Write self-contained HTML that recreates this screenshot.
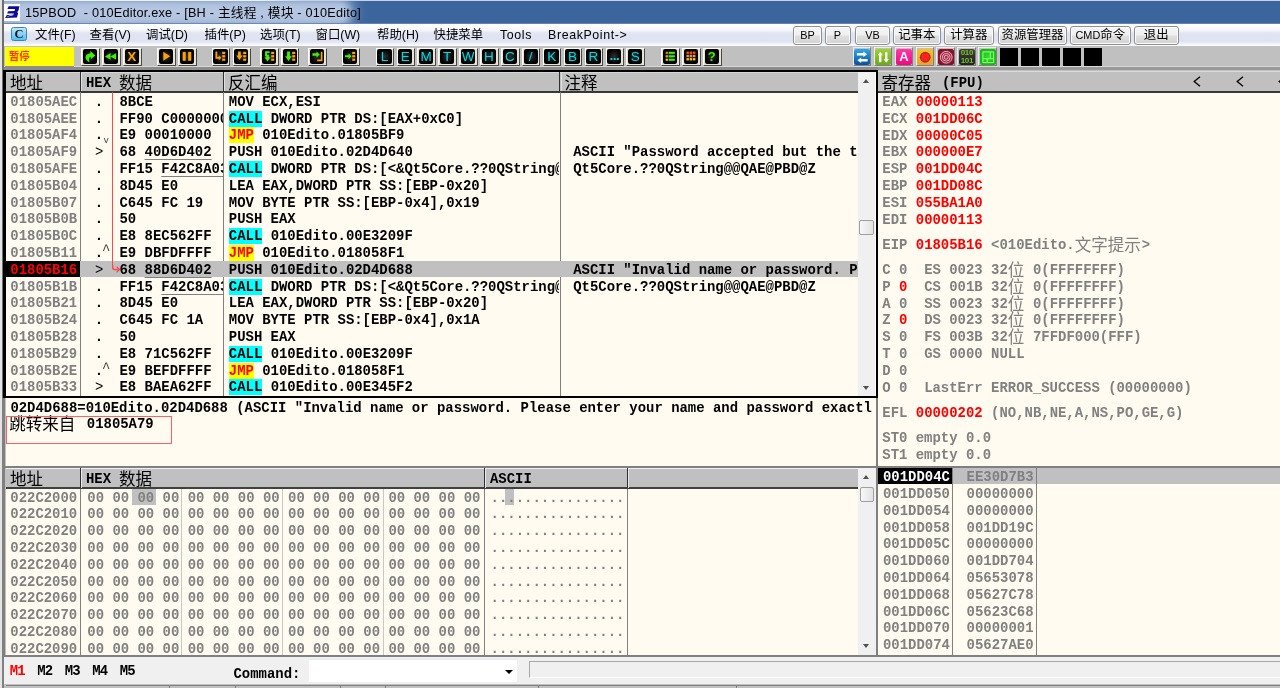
<!DOCTYPE html><html><head><meta charset="utf-8"><title>15PBOD - 010Editor.exe</title><style>
html,body{margin:0;padding:0;}
body{width:1280px;height:688px;overflow:hidden;position:relative;background:#c0c0c0;font-family:"Liberation Sans","Noto Sans CJK SC",sans-serif;}
.a{position:absolute;}
.m{position:absolute;white-space:pre;font-family:"Liberation Mono","DejaVu Sans Mono",monospace;font-weight:bold;font-size:13.95px;line-height:16.8px;height:16.8px;color:#000;}
.g{color:#808080;}
.r{color:#ff0000;}
.w{color:#fff;}
.cj{position:absolute;white-space:pre;font-family:"Liberation Sans","Noto Sans CJK SC",sans-serif;font-weight:400;font-size:16.5px;line-height:16.8px;height:16.8px;color:#000;}
.pane{position:absolute;background:#fffbf0;overflow:hidden;}
.hd{position:absolute;background:#c0c0c0;}
.call{background:#00ffff;padding-top:1.3px;}
.jmp{background:#ffff00;color:#ff0000;padding-top:1.3px;}
.u{text-decoration:underline;text-decoration-color:#808080;text-decoration-thickness:1px;text-underline-offset:3px;}
.sm{font-weight:normal;color:#404040;}
.mi{position:absolute;top:26px;height:18px;line-height:18px;font-size:12.4px;color:#000;white-space:pre;}
.btn{position:absolute;top:26.3px;height:16.4px;border:1px solid #8e8f8f;border-radius:3px;background:linear-gradient(#f6f6f6,#efefef 48%,#dfdfdf 52%,#d4d4d4);font-size:12.4px;line-height:16.4px;text-align:center;color:#000;white-space:pre;box-shadow:inset 0 0 0 1px #fbfbfb;}
.ic{position:absolute;top:47.5px;width:18.6px;height:18px;box-sizing:border-box;background:#e8e4d4;border-right:1.2px solid #484848;border-bottom:1.2px solid #484848;border-top:1px solid #fbfbf8;border-left:1px solid #fbfbf8;}
.ic i{position:absolute;left:0.7px;top:0.5px;width:14.3px;height:14.6px;background:radial-gradient(#303030,#000 65%);border-radius:2.2px;display:block;}
.ic b{position:absolute;left:0.7px;top:0.5px;width:14.3px;height:14.6px;line-height:15.2px;text-align:center;font-family:"Liberation Sans",sans-serif;font-weight:normal;font-size:13.5px;color:#08d8e0;display:block;}
.ic svg{position:absolute;left:0.7px;top:0.5px;width:14.3px;height:14.6px;}
.ci{position:absolute;top:47.3px;width:18.3px;height:18.3px;box-sizing:border-box;border-right:1.2px solid #808080;border-bottom:1.2px solid #808080;border-left:0.8px solid #ececec;border-top:0.8px solid #ececec;}
.ci i{position:absolute;left:0.3px;top:0.3px;width:16.5px;height:16.5px;border-radius:2.5px;display:block;}
.ci svg{position:absolute;left:0.3px;top:0.3px;width:16.5px;height:16.5px;}
</style></head><body><div id="root" style="position:absolute;left:0;top:0;width:1280px;height:688px;will-change:transform">
<div class="a" style="left:0;top:0;width:1280px;height:24.4px;background:#3c659d;overflow:hidden"><div class="a" style="left:-30px;top:9px;width:372px;height:7px;background:#b4c6e1;border-radius:6px;box-shadow:0 0 7px 8px #b4c6e1, 0 0 14px 12px rgba(160,184,218,0.75)"></div><div class="a" style="left:0;top:0;width:300px;height:1.2px;background:linear-gradient(90deg,#eef0f3 0,#eef0f3 260px,#c9d2e0 300px)"></div><div class="a" style="left:300px;top:0;width:980px;height:1.1px;background:#c9d2e0"></div><div class="a" style="left:0;top:22.8px;width:1280px;height:1.6px;background:linear-gradient(rgba(90,120,165,0.9),rgba(120,146,186,0.9))"></div></div>
<div class="a" style="left:3.50px;top:4.00px;width:16.70px;height:17.00px;background:#fff;"></div>
<svg class="a" style="left:3.5px;top:4px" width="17" height="17" viewBox="0 0 17 17"><path d="M4.6 2.2 L15.4 2.2 L14.5 6.6 L13.2 7.9 L14.1 9.2 L13 13.6 L1.2 14 L2.8 11 L9.4 10.8 L9.9 9.4 L3.2 9.4 L4 7.3 L10.5 7.1 L11 5 L3.4 5 Z" fill="#0c0c98"/><path d="M2.6 12.9 C4.6 11 8.6 10.9 10 11.8 C7.6 11.6 5 12.2 2.6 12.9Z" fill="#f4f4ff"/></svg>
<div class="a" style="left:25px;top:3px;height:20px;line-height:20px;font-size:12.7px;letter-spacing:0.21px;color:#000;white-space:pre">15PBOD  - 010Editor.exe - [BH - 主线程 , 模块 - 010Edito]</div>
<div class="a" style="left:0.00px;top:24.40px;width:1280.00px;height:22.00px;background:linear-gradient(#ffffff 0%,#f5f7fb 28%,#e2e6f3 40%,#dde1f1 76%,#eceff7 88%,#fbfbfd 96%);"></div>
<div class="a" style="left:11.2px;top:27px;width:15.6px;height:14.4px;box-sizing:border-box;border:1px solid #3b86ad;border-radius:2.5px;background:linear-gradient(#bfe6fb,#52bff2);font-family:'Liberation Serif',serif;font-weight:bold;font-size:12.5px;line-height:12px;text-align:center;color:#101820">C</div>
<div class="mi" style="left:35px">文件(F)</div>
<div class="mi" style="left:89.5px">查看(V)</div>
<div class="mi" style="left:146px">调试(D)</div>
<div class="mi" style="left:204.5px">插件(P)</div>
<div class="mi" style="left:260px">选项(T)</div>
<div class="mi" style="left:315.5px">窗口(W)</div>
<div class="mi" style="left:377px">帮助(H)</div>
<div class="mi" style="left:433.5px">快捷菜单</div>
<div class="mi" style="left:500px;letter-spacing:0.62px">Tools</div>
<div class="mi" style="left:548px;letter-spacing:0.62px">BreakPoint-&gt;</div>
<div class="btn" style="left:793px;width:27px"><span style="font-size:10.9px">BP</span></div>
<div class="btn" style="left:824.5px;width:24.0px"><span style="font-size:10.9px">P</span></div>
<div class="btn" style="left:855px;width:33px"><span style="font-size:10.9px">VB</span></div>
<div class="btn" style="left:893px;width:45.5px">记事本</div>
<div class="btn" style="left:943.5px;width:48.5px">计算器</div>
<div class="btn" style="left:998px;width:67px">资源管理器</div>
<div class="btn" style="left:1070px;width:58.5px"><span style="font-size:10.9px">CMD</span>命令</div>
<div class="btn" style="left:1133.5px;width:43.5px">退出</div>
<div class="a" style="left:0.00px;top:46.40px;width:1280.00px;height:24.00px;background:#c0c0c0;"></div>
<div class="a" style="left:0.00px;top:65.80px;width:1280.00px;height:1.30px;background:#d8d8d8;"></div>
<div class="a" style="left:0.00px;top:67.10px;width:1280.00px;height:2.60px;background:#8c8c8c;"></div>
<div class="a" style="left:2.80px;top:69.60px;width:875.00px;height:1.90px;background:#000;"></div>
<div class="a" style="left:877.80px;top:67.10px;width:403.00px;height:3.40px;background:#9a9a9a;"></div>
<div class="a" style="left:877.80px;top:70.50px;width:403.00px;height:1.20px;background:#dadada;"></div>
<div class="a" style="left:4.60px;top:46.60px;width:69.40px;height:20.00px;background:#909090;"></div>
<div class="a" style="left:5.20px;top:47.20px;width:68.60px;height:19.20px;background:#ffff00;"></div>
<div class="a" style="left:9px;top:48.3px;height:18px;line-height:18px;font-size:10.3px;font-weight:bold;color:#ff3000">暂停</div>
<div class="ic" style="left:81.20px"><i></i><svg viewBox="0 0 14 14"><path d="M7.2 1.8 L12.1 6.2 L7.6 9.8 L7.6 7.8 C6 7.8 5.2 9.6 6.6 13 C3.2 11.4 1.6 8.4 3 6.2 C4 4.6 5.6 4.2 7.2 4.2 Z" fill="#40f000"/></svg></div>
<div class="ic" style="left:102.10px"><i></i><svg viewBox="0 0 14 14"><path d="M6.4 3.8 L6.4 10.5 L0.9 7.15 Z M11.9 3.8 L11.9 10.5 L6.4 7.15 Z" fill="#40f000"/></svg></div>
<div class="ic" style="left:123.00px"><i></i><b style="color:#ffa000;font-weight:bold;font-size:13.5px">X</b></div>
<div class="ic" style="left:157.10px"><i></i><svg viewBox="0 0 14 14"><path d="M4.2 2.6 L11 7 L4.2 11.4 Z" fill="#ffa000"/></svg></div>
<div class="ic" style="left:178.00px"><i></i><svg viewBox="0 0 14 14"><rect x="2.6" y="2.7" width="3" height="8.7" fill="#ffa000"/><rect x="8" y="2.7" width="3" height="8.7" fill="#ffa000"/></svg></div>
<div class="ic" style="left:211.60px"><i></i><svg viewBox="0 0 14 14"><path d="M2.4 2.2 L4.2 2.2 L4.2 7.6 L5.6 7.6 L5.6 6 L8.2 8.5 L5.6 11 L5.6 9.4 L2.4 9.4 Z" fill="#ffa000"/><rect x="9" y="2.6" width="3" height="2.2" fill="#ffa000"/><rect x="9" y="5.9" width="3" height="2.2" fill="#ffa000"/><rect x="9" y="9.2" width="3" height="2.2" fill="#ffa000"/></svg></div>
<div class="ic" style="left:232.50px"><i></i><svg viewBox="0 0 14 14"><path d="M4 2.4 L6.6 2.4 L6.6 6.2 L8.4 6.2 L5.3 10.6 L2.2 6.2 L4 6.2 Z" fill="#ffa000"/><rect x="9" y="2.6" width="3" height="2.2" fill="#ffa000"/><rect x="9" y="5.9" width="3" height="2.2" fill="#ffa000"/><rect x="9" y="9.2" width="3" height="2.2" fill="#ffa000"/></svg></div>
<div class="ic" style="left:260.00px"><i></i><svg viewBox="0 0 14 14"><path d="M7.4 2 L7.4 3.8 L5 3.8 L5 5.6 L6.8 5.6 L6.8 8 L8.4 8 L5.4 12 L2.4 8 L4 8 L4 7 L3 7 L3 2 Z" fill="#40f000"/><rect x="9" y="2.6" width="3" height="2.2" fill="#ffa000"/><rect x="9" y="5.9" width="3" height="2.2" fill="#ffa000"/><rect x="9" y="9.2" width="3" height="2.2" fill="#ffa000"/></svg></div>
<div class="ic" style="left:280.90px"><i></i><svg viewBox="0 0 14 14"><path d="M4 2.2 L6.8 2.2 L6.8 7 L8.6 7 L5.4 11.6 L2.2 7 L4 7 Z" fill="#40f000"/><rect x="9" y="2.6" width="3" height="2.2" fill="#ffa000"/><rect x="9" y="5.9" width="3" height="2.2" fill="#ffa000"/><rect x="9" y="9.2" width="3" height="2.2" fill="#ffa000"/></svg></div>
<div class="ic" style="left:308.20px"><i></i><svg viewBox="0 0 14 14"><path d="M2.4 4 L6.4 4 L6.4 2.2 L9.6 5.2 L6.4 8.2 L6.4 6.4 L2.4 6.4 Z" fill="#40f000"/><path d="M10.6 2.6 L12.2 2.6 L12.2 11.8 L7 11.8 L7 10.2 L10.6 10.2 Z" fill="#ffa000"/></svg></div>
<div class="ic" style="left:341.50px"><i></i><svg viewBox="0 0 14 14"><path d="M2 6 L5.4 6 L5.4 4.2 L8.4 7 L5.4 9.8 L5.4 8 L2 8 Z" fill="#40f000"/><rect x="9" y="2.6" width="3" height="2.2" fill="#ffa000"/><rect x="9" y="5.9" width="3" height="2.2" fill="#ffa000"/><rect x="9" y="9.2" width="3" height="2.2" fill="#ffa000"/></svg></div>
<div class="ic" style="left:375.60px"><i></i><b>L</b></div>
<div class="ic" style="left:396.50px"><i></i><b>E</b></div>
<div class="ic" style="left:417.40px"><i></i><b>M</b></div>
<div class="ic" style="left:438.30px"><i></i><b>T</b></div>
<div class="ic" style="left:459.20px"><i></i><b>W</b></div>
<div class="ic" style="left:480.10px"><i></i><b>H</b></div>
<div class="ic" style="left:501.00px"><i></i><b>C</b></div>
<div class="ic" style="left:521.90px"><i></i><b>/</b></div>
<div class="ic" style="left:542.80px"><i></i><b>K</b></div>
<div class="ic" style="left:563.70px"><i></i><b>B</b></div>
<div class="ic" style="left:584.60px"><i></i><b>R</b></div>
<div class="ic" style="left:605.50px"><i></i><b style="font-weight:bold;line-height:13px;letter-spacing:-0.5px">...</b></div>
<div class="ic" style="left:626.40px"><i></i><b>S</b></div>
<div class="ic" style="left:661.20px"><i></i><svg viewBox="0 0 14 14"><rect x="2.6" y="2.6" width="2.2" height="2" fill="#ff8000"/><rect x="5.6" y="2.6" width="6" height="2" fill="#40f000"/><rect x="2.6" y="6.0" width="2.2" height="2" fill="#ffb000"/><rect x="5.6" y="6.0" width="6" height="2" fill="#40f000"/><rect x="2.6" y="9.4" width="2.2" height="2" fill="#ffd000"/><rect x="5.6" y="9.4" width="6" height="2" fill="#40f000"/></svg></div>
<div class="ic" style="left:682.10px"><i></i><svg viewBox="0 0 14 14"><rect x="2.4" y="2.4" width="2.4" height="2.2" fill="#ff5020"/><rect x="5.6" y="2.4" width="2.4" height="2.2" fill="#ff5020"/><rect x="8.8" y="2.4" width="2.4" height="2.2" fill="#ff5020"/><rect x="2.4" y="5.6" width="2.4" height="2.2" fill="#ff9020"/><rect x="5.6" y="5.6" width="2.4" height="2.2" fill="#ff9020"/><rect x="8.8" y="5.6" width="2.4" height="2.2" fill="#ff9020"/><rect x="2.4" y="8.8" width="2.4" height="2.2" fill="#ffc020"/><rect x="5.6" y="8.8" width="2.4" height="2.2" fill="#ffc020"/><rect x="8.8" y="8.8" width="2.4" height="2.2" fill="#ffc020"/></svg></div>
<div class="ic" style="left:703.00px"><i></i><b style="color:#40f000;font-weight:bold;font-size:13px">?</b></div>
<div class="ci" style="left:852.60px"><i style="background:linear-gradient(#2aa8f0,#0a4f9c)"></i><svg viewBox="0 0 17 17"><path d="M3 4.2 L9.6 4.2 L9.6 2.6 L13.6 5.4 L9.6 8.2 L9.6 6.6 L3 6.6 Z M14 10.4 L7.4 10.4 L7.4 8.8 L3.4 11.6 L7.4 14.4 L7.4 12.8 L14 12.8 Z" fill="#fff"/></svg></div>
<div class="ci" style="left:873.60px"><i style="background:linear-gradient(#9bd430,#6aa818)"></i><svg viewBox="0 0 17 17"><path d="M5.4 2.8 L8 6.4 L6.6 6.4 L6.6 13.6 L4.2 13.6 L4.2 6.4 L2.8 6.4 Z M11.6 14.2 L9 10.6 L10.4 10.6 L10.4 3.4 L12.8 3.4 L12.8 10.6 L14.2 10.6 Z" fill="#fff"/></svg></div>
<div class="ci" style="left:894.50px"><i style="background:linear-gradient(#ff38a8,#f0087c)"></i><b style="position:absolute;left:0;top:0;width:17px;height:17px;line-height:17.5px;text-align:center;font-size:13px;font-weight:bold;color:#fff;display:block">A</b></div>
<div class="ci" style="left:915.50px"><i style="background:linear-gradient(#f8c020,#f0a030)"></i><svg viewBox="0 0 17 17"><circle cx="8.5" cy="8.5" r="5.6" fill="#a83018"/><circle cx="8.5" cy="8.5" r="4.2" fill="#ff2020"/></svg></div>
<div class="ci" style="left:936.40px"><i style="background:radial-gradient(#b02848,#780820)"></i><svg viewBox="0 0 17 17"><circle cx="8.5" cy="8.5" r="6" fill="none" stroke="#f0d0d8" stroke-width="0.9"/><circle cx="8.5" cy="8.5" r="4" fill="none" stroke="#f0d0d8" stroke-width="0.9"/><circle cx="8.5" cy="8.5" r="2" fill="none" stroke="#f0d0d8" stroke-width="0.9"/></svg></div>
<div class="ci" style="left:957.40px"><i style="background:linear-gradient(#404040,#202020)"></i><b style="position:absolute;left:0;top:0.5px;width:17px;line-height:8px;text-align:center;font-size:8px;font-weight:bold;color:#78c020;display:block;letter-spacing:-0.3px">010<br>101</b></div>
<div class="ci" style="left:978.30px"><i style="background:radial-gradient(#30e030,#10a810)"></i><svg viewBox="0 0 17 17"><rect x="3" y="3" width="11" height="11" fill="none" stroke="#90ff70" stroke-width="1.1"/><path d="M3 10 L14 10 M10.6 3 L10.6 10 M7.4 10 L7.4 14" stroke="#90ff70" stroke-width="1.1" fill="none"/></svg></div>
<div class="a" style="left:1000.30px;top:47.60px;width:18.00px;height:18.60px;background:#000;"></div>
<div class="a" style="left:1021.30px;top:47.60px;width:18.00px;height:18.60px;background:#000;"></div>
<div class="a" style="left:1042.30px;top:47.60px;width:18.00px;height:18.60px;background:#000;"></div>
<div class="a" style="left:1063.30px;top:47.60px;width:18.00px;height:18.60px;background:#000;"></div>
<div class="a" style="left:1084.30px;top:47.60px;width:18.00px;height:18.60px;background:#000;"></div>
<div class="a" style="left:0.00px;top:0.00px;width:2.00px;height:688.00px;background:#e4e4e4;"></div>
<div class="a" style="left:2.00px;top:0.00px;width:1.50px;height:688.00px;background:#6e6e6e;"></div>
<div class="a" style="left:2.80px;top:70.00px;width:875.00px;height:328.30px;background:#000;"></div>
<div class="pane" style="left:5.5px;top:71.5px;width:870.1px;height:324.7px">
<div class="a" style="left:0.00px;top:0.00px;width:852.50px;height:19.60px;background:#c0c0c0;"></div>
<div class="a" style="left:0.00px;top:19.50px;width:852.50px;height:1.60px;background:#383838;"></div>
<div class="a" style="left:0.00px;top:0.00px;width:852.50px;height:1.00px;background:#d6d6d6;"></div>
<div class="a" style="left:74.50px;top:0.00px;width:1.20px;height:20.00px;background:#303030;"></div>
<div class="a" style="left:75.70px;top:1.00px;width:1.00px;height:18.50px;background:#e0e0e0;"></div>
<div class="a" style="left:74.80px;top:20.90px;width:1.00px;height:304.00px;background:#808080;"></div>
<div class="a" style="left:217.50px;top:0.00px;width:1.20px;height:20.00px;background:#303030;"></div>
<div class="a" style="left:218.70px;top:1.00px;width:1.00px;height:18.50px;background:#e0e0e0;"></div>
<div class="a" style="left:217.80px;top:20.90px;width:1.00px;height:304.00px;background:#808080;"></div>
<div class="a" style="left:553.80px;top:0.00px;width:1.20px;height:20.00px;background:#303030;"></div>
<div class="a" style="left:555.00px;top:1.00px;width:1.00px;height:18.50px;background:#e0e0e0;"></div>
<div class="a" style="left:554.10px;top:20.90px;width:1.00px;height:304.00px;background:#808080;"></div>
<div class="cj" style="left:4.50px;top:3.50px;">地址</div>
<div class="m " style="left:80.50px;top:3.50px;">HEX</div>
<div class="cj" style="left:113.50px;top:3.50px;">数据</div>
<div class="cj" style="left:222.50px;top:3.50px;">反汇编</div>
<div class="cj" style="left:559.00px;top:3.50px;">注释</div>
<div class="a" style="left:0.00px;top:189.50px;width:852.50px;height:16.00px;background:#c0c0c0;"></div>
<div class="a" style="left:0.00px;top:189.50px;width:74.50px;height:16.00px;background:#000;"></div>
<div class="m g" style="left:4.80px;top:22.50px;">01805AEC</div>
<div class="m " style="left:81.00px;top:22.50px;"> . </div>
<div class="a" style="left:114.00px;top:22.50px;width:103.50px;height:16.80px;overflow:hidden"><div class="m" style="left:0;top:0">8BCE</div></div>
<div class="a" style="left:223.30px;top:22.50px;width:330.50px;height:16.80px;overflow:hidden"><div class="m" style="left:0;top:0">MOV ECX,ESI</div></div>
<div class="m g" style="left:4.80px;top:39.50px;">01805AEE</div>
<div class="m " style="left:81.00px;top:39.50px;"> . </div>
<div class="a" style="left:114.00px;top:39.50px;width:103.50px;height:16.80px;overflow:hidden"><div class="m" style="left:0;top:0">FF90 C0000000</div></div>
<div class="a" style="left:223.30px;top:39.50px;width:330.50px;height:16.80px;overflow:hidden"><div class="m" style="left:0;top:0"><span class="call">CALL</span> DWORD PTR DS:[EAX+0xC0]</div></div>
<div class="m g" style="left:4.80px;top:55.50px;">01805AF4</div>
<div class="m " style="left:81.00px;top:55.50px;"> .<span class="sm" style="font-size:9px;position:relative;top:3.8px;left:0.2px">v</span></div>
<div class="a" style="left:114.00px;top:55.50px;width:103.50px;height:16.80px;overflow:hidden"><div class="m" style="left:0;top:0">E9 00010000</div></div>
<div class="a" style="left:223.30px;top:55.50px;width:330.50px;height:16.80px;overflow:hidden"><div class="m" style="left:0;top:0"><span class="jmp">JMP</span> 010Edito.01805BF9</div></div>
<div class="m g" style="left:4.80px;top:72.50px;">01805AF9</div>
<div class="m " style="left:81.00px;top:72.50px;"> <span style="font-weight:normal">&gt;</span> </div>
<div class="a" style="left:114.00px;top:72.50px;width:103.50px;height:16.80px;overflow:hidden"><div class="m" style="left:0;top:0">68 <span class="u">40D6D402</span></div></div>
<div class="a" style="left:223.30px;top:72.50px;width:330.50px;height:16.80px;overflow:hidden"><div class="m" style="left:0;top:0">PUSH 010Edito.02D4D640</div></div>
<div class="a" style="left:567.70px;top:72.50px;width:284.60px;height:16.80px;overflow:hidden"><div class="m" style="left:0;top:0">ASCII "Password accepted but the t</div></div>
<div class="m g" style="left:4.80px;top:89.50px;">01805AFE</div>
<div class="m " style="left:81.00px;top:89.50px;"> . </div>
<div class="a" style="left:114.00px;top:89.50px;width:103.50px;height:16.80px;overflow:hidden"><div class="m" style="left:0;top:0">FF15 <span class="u">F42C8A03</span></div></div>
<div class="a" style="left:223.30px;top:89.50px;width:330.50px;height:16.80px;overflow:hidden"><div class="m" style="left:0;top:0"><span class="call">CALL</span> DWORD PTR DS:[&lt;&amp;Qt5Core.??0QString@</div></div>
<div class="a" style="left:567.70px;top:89.50px;width:284.60px;height:16.80px;overflow:hidden"><div class="m" style="left:0;top:0">Qt5Core.??0QString@@QAE@PBD@Z</div></div>
<div class="m g" style="left:4.80px;top:106.50px;">01805B04</div>
<div class="m " style="left:81.00px;top:106.50px;"> . </div>
<div class="a" style="left:114.00px;top:106.50px;width:103.50px;height:16.80px;overflow:hidden"><div class="m" style="left:0;top:0">8D45 E0</div></div>
<div class="a" style="left:223.30px;top:106.50px;width:330.50px;height:16.80px;overflow:hidden"><div class="m" style="left:0;top:0">LEA EAX,DWORD PTR SS:[EBP-0x20]</div></div>
<div class="m g" style="left:4.80px;top:123.50px;">01805B07</div>
<div class="m " style="left:81.00px;top:123.50px;"> . </div>
<div class="a" style="left:114.00px;top:123.50px;width:103.50px;height:16.80px;overflow:hidden"><div class="m" style="left:0;top:0">C645 FC 19</div></div>
<div class="a" style="left:223.30px;top:123.50px;width:330.50px;height:16.80px;overflow:hidden"><div class="m" style="left:0;top:0">MOV BYTE PTR SS:[EBP-0x4],0x19</div></div>
<div class="m g" style="left:4.80px;top:139.50px;">01805B0B</div>
<div class="m " style="left:81.00px;top:139.50px;"> . </div>
<div class="a" style="left:114.00px;top:139.50px;width:103.50px;height:16.80px;overflow:hidden"><div class="m" style="left:0;top:0">50</div></div>
<div class="a" style="left:223.30px;top:139.50px;width:330.50px;height:16.80px;overflow:hidden"><div class="m" style="left:0;top:0">PUSH EAX</div></div>
<div class="m g" style="left:4.80px;top:156.50px;">01805B0C</div>
<div class="m " style="left:81.00px;top:156.50px;"> . </div>
<div class="a" style="left:114.00px;top:156.50px;width:103.50px;height:16.80px;overflow:hidden"><div class="m" style="left:0;top:0">E8 8EC562FF</div></div>
<div class="a" style="left:223.30px;top:156.50px;width:330.50px;height:16.80px;overflow:hidden"><div class="m" style="left:0;top:0"><span class="call">CALL</span> 010Edito.00E3209F</div></div>
<div class="m g" style="left:4.80px;top:173.50px;">01805B11</div>
<div class="m " style="left:81.00px;top:173.50px;"> .<span class="sm" style="position:relative;top:-2.6px;left:-1.2px">^</span></div>
<div class="a" style="left:114.00px;top:173.50px;width:103.50px;height:16.80px;overflow:hidden"><div class="m" style="left:0;top:0">E9 DBFDFFFF</div></div>
<div class="a" style="left:223.30px;top:173.50px;width:330.50px;height:16.80px;overflow:hidden"><div class="m" style="left:0;top:0"><span class="jmp">JMP</span> 010Edito.018058F1</div></div>
<div class="m r" style="left:4.80px;top:190.50px;">01805B16</div>
<div class="m " style="left:81.00px;top:190.50px;"> <span style="font-weight:normal">&gt;</span> </div>
<div class="a" style="left:114.00px;top:190.50px;width:103.50px;height:16.80px;overflow:hidden"><div class="m" style="left:0;top:0">68 <span class="u">88D6D402</span></div></div>
<div class="a" style="left:223.30px;top:190.50px;width:330.50px;height:16.80px;overflow:hidden"><div class="m" style="left:0;top:0">PUSH 010Edito.02D4D688</div></div>
<div class="a" style="left:567.70px;top:190.50px;width:284.60px;height:16.80px;overflow:hidden"><div class="m" style="left:0;top:0">ASCII "Invalid name or password. P</div></div>
<div class="m g" style="left:4.80px;top:207.50px;">01805B1B</div>
<div class="m " style="left:81.00px;top:207.50px;"> . </div>
<div class="a" style="left:114.00px;top:207.50px;width:103.50px;height:16.80px;overflow:hidden"><div class="m" style="left:0;top:0">FF15 <span class="u">F42C8A03</span></div></div>
<div class="a" style="left:223.30px;top:207.50px;width:330.50px;height:16.80px;overflow:hidden"><div class="m" style="left:0;top:0"><span class="call">CALL</span> DWORD PTR DS:[&lt;&amp;Qt5Core.??0QString@</div></div>
<div class="a" style="left:567.70px;top:207.50px;width:284.60px;height:16.80px;overflow:hidden"><div class="m" style="left:0;top:0">Qt5Core.??0QString@@QAE@PBD@Z</div></div>
<div class="m g" style="left:4.80px;top:223.50px;">01805B21</div>
<div class="m " style="left:81.00px;top:223.50px;"> . </div>
<div class="a" style="left:114.00px;top:223.50px;width:103.50px;height:16.80px;overflow:hidden"><div class="m" style="left:0;top:0">8D45 E0</div></div>
<div class="a" style="left:223.30px;top:223.50px;width:330.50px;height:16.80px;overflow:hidden"><div class="m" style="left:0;top:0">LEA EAX,DWORD PTR SS:[EBP-0x20]</div></div>
<div class="m g" style="left:4.80px;top:240.50px;">01805B24</div>
<div class="m " style="left:81.00px;top:240.50px;"> . </div>
<div class="a" style="left:114.00px;top:240.50px;width:103.50px;height:16.80px;overflow:hidden"><div class="m" style="left:0;top:0">C645 FC 1A</div></div>
<div class="a" style="left:223.30px;top:240.50px;width:330.50px;height:16.80px;overflow:hidden"><div class="m" style="left:0;top:0">MOV BYTE PTR SS:[EBP-0x4],0x1A</div></div>
<div class="m g" style="left:4.80px;top:257.50px;">01805B28</div>
<div class="m " style="left:81.00px;top:257.50px;"> . </div>
<div class="a" style="left:114.00px;top:257.50px;width:103.50px;height:16.80px;overflow:hidden"><div class="m" style="left:0;top:0">50</div></div>
<div class="a" style="left:223.30px;top:257.50px;width:330.50px;height:16.80px;overflow:hidden"><div class="m" style="left:0;top:0">PUSH EAX</div></div>
<div class="m g" style="left:4.80px;top:274.50px;">01805B29</div>
<div class="m " style="left:81.00px;top:274.50px;"> . </div>
<div class="a" style="left:114.00px;top:274.50px;width:103.50px;height:16.80px;overflow:hidden"><div class="m" style="left:0;top:0">E8 71C562FF</div></div>
<div class="a" style="left:223.30px;top:274.50px;width:330.50px;height:16.80px;overflow:hidden"><div class="m" style="left:0;top:0"><span class="call">CALL</span> 010Edito.00E3209F</div></div>
<div class="m g" style="left:4.80px;top:291.50px;">01805B2E</div>
<div class="m " style="left:81.00px;top:291.50px;"> .<span class="sm" style="position:relative;top:-2.6px;left:-1.2px">^</span></div>
<div class="a" style="left:114.00px;top:291.50px;width:103.50px;height:16.80px;overflow:hidden"><div class="m" style="left:0;top:0">E9 BEFDFFFF</div></div>
<div class="a" style="left:223.30px;top:291.50px;width:330.50px;height:16.80px;overflow:hidden"><div class="m" style="left:0;top:0"><span class="jmp">JMP</span> 010Edito.018058F1</div></div>
<div class="m g" style="left:4.80px;top:307.50px;">01805B33</div>
<div class="m " style="left:81.00px;top:307.50px;"> <span style="font-weight:normal">&gt;</span> </div>
<div class="a" style="left:114.00px;top:307.50px;width:103.50px;height:16.80px;overflow:hidden"><div class="m" style="left:0;top:0">E8 BAEA62FF</div></div>
<div class="a" style="left:223.30px;top:307.50px;width:330.50px;height:16.80px;overflow:hidden"><div class="m" style="left:0;top:0"><span class="call">CALL</span> 010Edito.00E345F2</div></div>
<div class="a" style="left:106.10px;top:20.90px;width:1.40px;height:175.20px;background:#ff4848;"></div>
<svg class="a" style="left:106.1px;top:193.1px" width="9" height="9" viewBox="0 0 9 9"><path d="M0.7 0 L0.7 2.6 Q0.7 4.5 2.6 4.5 L7 4.5" fill="none" stroke="#ff4848" stroke-width="1.4"/><path d="M4.6 1.8 L7.6 4.5 L4.6 7.2" fill="none" stroke="#ff4848" stroke-width="1.3"/></svg>
</div>
<div class="a" style="left:858.0px;top:71.5px;width:17.3px;height:324.7px;background:#f0f0f0"></div><div class="a" style="left:863.0px;top:78.5px;width:0;height:0;border:3.6px solid transparent;border-bottom:4px solid #505050;border-top:0"></div><div class="a" style="left:863.0px;top:385.7px;width:0;height:0;border:3.6px solid transparent;border-top:4px solid #505050;border-bottom:0"></div><div class="a" style="left:859.4px;top:220.2px;width:14.5px;height:14.9px;box-sizing:border-box;border:1px solid #a0a0a0;border-radius:2px;background:linear-gradient(90deg,#f8f8f8,#e2e2e2)"></div>
<div class="a" style="left:2.40px;top:398.30px;width:3.10px;height:290.00px;background:#808080;"></div>
<div class="a" style="left:875.60px;top:398.30px;width:2.20px;height:257.00px;background:#808080;"></div>
<div class="pane" style="left:5.5px;top:398.3px;width:870.1px;height:67.3px">
<div class="m " style="left:4.90px;top:1.70px;">02D4D688=010Edito.02D4D688 (ASCII "Invalid name or password. Please enter your name and password exactl</div>
<div class="cj" style="left:3.70px;top:17.70px;">跳转来自</div>
<div class="m " style="left:81.30px;top:17.70px;">01805A79</div>
<div class="a" style="left:0.0px;top:17.9px;width:166.3px;height:27.5px;border:1px solid #ff6060;box-sizing:border-box"></div>
</div>
<div class="a" style="left:3.50px;top:465.60px;width:1276.50px;height:2.00px;background:#808080;"></div>
<div class="pane" style="left:5.5px;top:467.5px;width:870.1px;height:187.1px">
<div class="a" style="left:0.00px;top:0.00px;width:852.50px;height:20.00px;background:#c0c0c0;"></div>
<div class="a" style="left:0.00px;top:0.00px;width:852.50px;height:1.00px;background:#f0f0f0;"></div>
<div class="a" style="left:0.00px;top:19.90px;width:852.50px;height:1.40px;background:#404040;"></div>
<div class="a" style="left:74.50px;top:0.00px;width:1.20px;height:20.50px;background:#303030;"></div>
<div class="a" style="left:75.70px;top:1.00px;width:1.00px;height:19.00px;background:#e8e8e8;"></div>
<div class="a" style="left:74.80px;top:21.30px;width:1.00px;height:168.00px;background:#808080;"></div>
<div class="a" style="left:478.50px;top:0.00px;width:1.20px;height:20.50px;background:#303030;"></div>
<div class="a" style="left:479.70px;top:1.00px;width:1.00px;height:19.00px;background:#e8e8e8;"></div>
<div class="a" style="left:478.80px;top:21.30px;width:1.00px;height:168.00px;background:#808080;"></div>
<div class="a" style="left:621.00px;top:0.00px;width:1.20px;height:20.50px;background:#303030;"></div>
<div class="a" style="left:622.20px;top:1.00px;width:1.00px;height:19.00px;background:#e8e8e8;"></div>
<div class="a" style="left:621.30px;top:21.30px;width:1.00px;height:168.00px;background:#808080;"></div>
<div class="a" style="left:175.70px;top:21.30px;width:1.00px;height:168.00px;background:#c8c8c8;"></div>
<div class="a" style="left:276.70px;top:21.30px;width:1.00px;height:168.00px;background:#c8c8c8;"></div>
<div class="a" style="left:377.80px;top:21.30px;width:1.00px;height:168.00px;background:#c8c8c8;"></div>
<div class="cj" style="left:4.50px;top:3.50px;">地址</div>
<div class="m " style="left:80.50px;top:3.50px;">HEX</div>
<div class="cj" style="left:113.50px;top:3.50px;">数据</div>
<div class="m " style="left:484.50px;top:3.50px;">ASCII</div>
<div class="a" style="left:126.20px;top:21.50px;width:24.70px;height:16.00px;background:#c0c0c0;"></div>
<div class="a" style="left:499.90px;top:21.50px;width:8.50px;height:16.00px;background:#c0c0c0;"></div>
<div class="m g" style="left:4.80px;top:22.50px;">022C2000</div>
<div class="m g" style="left:81.80px;top:22.50px;">00 00 00 00 00 00 00 00 00 00 00 00 00 00 00 00</div>
<div class="m g" style="left:485.10px;top:22.50px;">................</div>
<div class="m g" style="left:4.80px;top:38.50px;">022C2010</div>
<div class="m g" style="left:81.80px;top:38.50px;">00 00 00 00 00 00 00 00 00 00 00 00 00 00 00 00</div>
<div class="m g" style="left:485.10px;top:38.50px;">................</div>
<div class="m g" style="left:4.80px;top:55.50px;">022C2020</div>
<div class="m g" style="left:81.80px;top:55.50px;">00 00 00 00 00 00 00 00 00 00 00 00 00 00 00 00</div>
<div class="m g" style="left:485.10px;top:55.50px;">................</div>
<div class="m g" style="left:4.80px;top:72.50px;">022C2030</div>
<div class="m g" style="left:81.80px;top:72.50px;">00 00 00 00 00 00 00 00 00 00 00 00 00 00 00 00</div>
<div class="m g" style="left:485.10px;top:72.50px;">................</div>
<div class="m g" style="left:4.80px;top:89.50px;">022C2040</div>
<div class="m g" style="left:81.80px;top:89.50px;">00 00 00 00 00 00 00 00 00 00 00 00 00 00 00 00</div>
<div class="m g" style="left:485.10px;top:89.50px;">................</div>
<div class="m g" style="left:4.80px;top:106.50px;">022C2050</div>
<div class="m g" style="left:81.80px;top:106.50px;">00 00 00 00 00 00 00 00 00 00 00 00 00 00 00 00</div>
<div class="m g" style="left:485.10px;top:106.50px;">................</div>
<div class="m g" style="left:4.80px;top:122.50px;">022C2060</div>
<div class="m g" style="left:81.80px;top:122.50px;">00 00 00 00 00 00 00 00 00 00 00 00 00 00 00 00</div>
<div class="m g" style="left:485.10px;top:122.50px;">................</div>
<div class="m g" style="left:4.80px;top:139.50px;">022C2070</div>
<div class="m g" style="left:81.80px;top:139.50px;">00 00 00 00 00 00 00 00 00 00 00 00 00 00 00 00</div>
<div class="m g" style="left:485.10px;top:139.50px;">................</div>
<div class="m g" style="left:4.80px;top:156.50px;">022C2080</div>
<div class="m g" style="left:81.80px;top:156.50px;">00 00 00 00 00 00 00 00 00 00 00 00 00 00 00 00</div>
<div class="m g" style="left:485.10px;top:156.50px;">................</div>
<div class="m g" style="left:4.80px;top:173.50px;">022C2090</div>
<div class="m g" style="left:81.80px;top:173.50px;">00 00 00 00 00 00 00 00 00 00 00 00 00 00 00 00</div>
<div class="m g" style="left:485.10px;top:173.50px;">................</div>
</div>
<div class="a" style="left:858.3px;top:467.5px;width:17.3px;height:187.1px;background:#f0f0f0"></div><div class="a" style="left:863.3px;top:474.5px;width:0;height:0;border:3.6px solid transparent;border-bottom:4px solid #505050;border-top:0"></div><div class="a" style="left:863.3px;top:644.1px;width:0;height:0;border:3.6px solid transparent;border-top:4px solid #505050;border-bottom:0"></div><div class="a" style="left:859.7px;top:487.0px;width:14.5px;height:15.0px;box-sizing:border-box;border:1px solid #a0a0a0;border-radius:2px;background:linear-gradient(90deg,#f8f8f8,#e2e2e2)"></div>
<div class="pane" style="left:877.8px;top:71.5px;width:402.2px;height:394.1px">
<div class="a" style="left:0.00px;top:0.00px;width:403.00px;height:19.30px;background:#c0c0c0;"></div>
<div class="a" style="left:0.00px;top:19.40px;width:403.00px;height:1.70px;background:#383838;"></div>
<div class="cj" style="left:3.70px;top:3.50px;">寄存器</div>
<div class="m " style="left:64.20px;top:3.50px;">(FPU)</div>
<svg class="a" style="left:315.4px;top:4.8px" width="8" height="11" viewBox="0 0 8 11"><path d="M7 0.8 L1.2 5.5 L7 10.2" fill="none" stroke="#000" stroke-width="1.3"/></svg>
<svg class="a" style="left:358.0px;top:4.8px" width="8" height="11" viewBox="0 0 8 11"><path d="M7 0.8 L1.2 5.5 L7 10.2" fill="none" stroke="#000" stroke-width="1.3"/></svg>
<svg class="a" style="left:399.8px;top:4.8px" width="8" height="11" viewBox="0 0 8 11"><path d="M7 0.8 L1.2 5.5 L7 10.2" fill="none" stroke="#000" stroke-width="1.3"/></svg>
<div class="m g" style="left:4.50px;top:22.50px;">EAX</div><div class="m r" style="left:37.98px;top:22.50px;">00000113</div>
<div class="m g" style="left:4.50px;top:39.50px;">ECX</div><div class="m r" style="left:37.98px;top:39.50px;">001DD06C</div>
<div class="m g" style="left:4.50px;top:56.50px;">EDX</div><div class="m r" style="left:37.98px;top:56.50px;">00000C05</div>
<div class="m g" style="left:4.50px;top:72.50px;">EBX</div><div class="m r" style="left:37.98px;top:72.50px;">000000E7</div>
<div class="m g" style="left:4.50px;top:89.50px;">ESP</div><div class="m r" style="left:37.98px;top:89.50px;">001DD04C</div>
<div class="m g" style="left:4.50px;top:106.50px;">EBP</div><div class="m r" style="left:37.98px;top:106.50px;">001DD08C</div>
<div class="m g" style="left:4.50px;top:123.50px;">ESI</div><div class="m r" style="left:37.98px;top:123.50px;">055BA1A0</div>
<div class="m g" style="left:4.50px;top:140.50px;">EDI</div><div class="m r" style="left:37.98px;top:140.50px;">00000113</div>
<div class="m g" style="left:4.50px;top:165.50px;">EIP</div><div class="m r" style="left:37.98px;top:165.50px;">01805B16</div><div class="m g" style="left:113.31px;top:165.50px;">&lt;010Edito.</div><div class="cj" style="left:197.01px;top:165.50px;color:#808080">文字提示</div><div class="m g" style="left:263.97px;top:165.50px;">&gt;</div>
<div class="m g" style="left:4.50px;top:190.50px;">C</div><div class="m g" style="left:21.24px;top:190.50px;">0</div><div class="m g" style="left:46.35px;top:190.50px;">ES 0023 32</div><div class="cj" style="left:130.05px;top:190.50px;color:#808080">位</div><div class="m g" style="left:155.16px;top:190.50px;">0(FFFFFFFF)</div>
<div class="m g" style="left:4.50px;top:207.50px;">P</div><div class="m r" style="left:21.24px;top:207.50px;">0</div><div class="m g" style="left:46.35px;top:207.50px;">CS 001B 32</div><div class="cj" style="left:130.05px;top:207.50px;color:#808080">位</div><div class="m g" style="left:155.16px;top:207.50px;">0(FFFFFFFF)</div>
<div class="m g" style="left:4.50px;top:224.50px;">A</div><div class="m g" style="left:21.24px;top:224.50px;">0</div><div class="m g" style="left:46.35px;top:224.50px;">SS 0023 32</div><div class="cj" style="left:130.05px;top:224.50px;color:#808080">位</div><div class="m g" style="left:155.16px;top:224.50px;">0(FFFFFFFF)</div>
<div class="m g" style="left:4.50px;top:240.50px;">Z</div><div class="m r" style="left:21.24px;top:240.50px;">0</div><div class="m g" style="left:46.35px;top:240.50px;">DS 0023 32</div><div class="cj" style="left:130.05px;top:240.50px;color:#808080">位</div><div class="m g" style="left:155.16px;top:240.50px;">0(FFFFFFFF)</div>
<div class="m g" style="left:4.50px;top:257.50px;">S</div><div class="m g" style="left:21.24px;top:257.50px;">0</div><div class="m g" style="left:46.35px;top:257.50px;">FS 003B 32</div><div class="cj" style="left:130.05px;top:257.50px;color:#808080">位</div><div class="m g" style="left:155.16px;top:257.50px;">7FFDF000(FFF)</div>
<div class="m g" style="left:4.50px;top:274.50px;">T</div><div class="m g" style="left:21.24px;top:274.50px;">0</div><div class="m g" style="left:46.35px;top:274.50px;">GS 0000 NULL</div>
<div class="m g" style="left:4.50px;top:291.50px;">D</div><div class="m g" style="left:21.24px;top:291.50px;">0</div>
<div class="m g" style="left:4.50px;top:308.50px;">O</div><div class="m g" style="left:21.24px;top:308.50px;">0</div><div class="m g" style="left:46.35px;top:308.50px;">LastErr ERROR_SUCCESS (00000000)</div>
<div class="m g" style="left:4.50px;top:333.50px;">EFL</div><div class="m r" style="left:37.98px;top:333.50px;">00000202</div><div class="m g" style="left:113.31px;top:333.50px;">(NO,NB,NE,A,NS,PO,GE,G)</div>
<div class="m g" style="left:4.50px;top:358.50px;">ST0 empty 0.0</div>
<div class="m g" style="left:4.50px;top:375.50px;">ST1 empty 0.0</div>
</div>
<div class="pane" style="left:877.8px;top:467.5px;width:402.2px;height:187.1px">
<div class="a" style="left:0.00px;top:0.50px;width:403.00px;height:15.80px;background:#c0c0c0;"></div>
<div class="a" style="left:0.00px;top:0.50px;width:74.20px;height:15.80px;background:#000;"></div>
<div class="a" style="left:74.20px;top:0.00px;width:1.00px;height:189.00px;background:#808080;"></div>
<div class="a" style="left:158.70px;top:0.00px;width:1.00px;height:189.00px;background:#808080;"></div>
<div class="m w" style="left:5.20px;top:1.50px;">001DD04C</div>
<div class="m g" style="left:88.80px;top:1.50px;">EE30D7B3</div>
<div class="m g" style="left:5.20px;top:18.50px;">001DD050</div>
<div class="m g" style="left:88.80px;top:18.50px;">00000000</div>
<div class="m g" style="left:5.20px;top:35.50px;">001DD054</div>
<div class="m g" style="left:88.80px;top:35.50px;">00000000</div>
<div class="m g" style="left:5.20px;top:52.50px;">001DD058</div>
<div class="m g" style="left:88.80px;top:52.50px;">001DD19C</div>
<div class="m g" style="left:5.20px;top:68.50px;">001DD05C</div>
<div class="m g" style="left:88.80px;top:68.50px;">00000000</div>
<div class="m g" style="left:5.20px;top:85.50px;">001DD060</div>
<div class="m g" style="left:88.80px;top:85.50px;">001DD704</div>
<div class="m g" style="left:5.20px;top:102.50px;">001DD064</div>
<div class="m g" style="left:88.80px;top:102.50px;">05653078</div>
<div class="m g" style="left:5.20px;top:119.50px;">001DD068</div>
<div class="m g" style="left:88.80px;top:119.50px;">05627C78</div>
<div class="m g" style="left:5.20px;top:136.50px;">001DD06C</div>
<div class="m g" style="left:88.80px;top:136.50px;">05623C68</div>
<div class="m g" style="left:5.20px;top:152.50px;">001DD070</div>
<div class="m g" style="left:88.80px;top:152.50px;">00000001</div>
<div class="m g" style="left:5.20px;top:169.50px;">001DD074</div>
<div class="m g" style="left:88.80px;top:169.50px;">05627AE0</div>
</div>
<div class="a" style="left:3.50px;top:654.60px;width:1276.50px;height:30.00px;background:#f0f0f0;"></div>
<div class="a" style="left:3.50px;top:654.60px;width:1276.50px;height:2.00px;background:#808080;"></div>
<div class="m r" style="left:9.80px;top:663.00px;letter-spacing:-0.9px">M1</div>
<div class="m " style="left:37.30px;top:663.00px;letter-spacing:-0.9px">M2</div>
<div class="m " style="left:64.80px;top:663.00px;letter-spacing:-0.9px">M3</div>
<div class="m " style="left:92.30px;top:663.00px;letter-spacing:-0.9px">M4</div>
<div class="m " style="left:119.80px;top:663.00px;letter-spacing:-0.9px">M5</div>
<div class="m " style="left:233.50px;top:666.00px;">Command:</div>
<div class="a" style="left:308.80px;top:658.60px;width:208.50px;height:23.00px;background:#fff;"></div>
<div class="a" style="left:308.80px;top:658.60px;width:208.50px;height:1.00px;background:#e4ecf6;"></div>
<div class="a" style="left:505px;top:669.5px;width:0;height:0;border:4px solid transparent;border-top:4px solid #000;border-bottom:0"></div>
<div class="a" style="left:528.7px;top:660.7px;width:760px;height:17.2px;box-sizing:border-box;border:1px solid #a8a8a8;border-bottom-color:#fdfdfd;border-right-color:#fdfdfd;background:#f0f0f0"></div>
<div class="a" style="left:3.50px;top:683.60px;width:1276.50px;height:0.80px;background:#fafafa;"></div>
<div class="a" style="left:3.50px;top:684.30px;width:1276.50px;height:4.00px;background:#c0c0c0;"></div>
<div class="a" style="left:5.50px;top:685.20px;width:1274.50px;height:1.00px;background:#808080;"></div>
<div class="a" style="left:169.00px;top:685.20px;width:1.00px;height:3.00px;background:#808080;"></div>
<div class="a" style="left:235.00px;top:685.20px;width:1.00px;height:3.00px;background:#808080;"></div>
<div class="a" style="left:340.00px;top:685.20px;width:1.00px;height:3.00px;background:#808080;"></div>
<div class="a" style="left:385.00px;top:685.20px;width:1.00px;height:3.00px;background:#808080;"></div>
<div class="a" style="left:537.50px;top:685.20px;width:1.00px;height:3.00px;background:#808080;"></div>
<div class="a" style="left:736.00px;top:685.20px;width:1.00px;height:3.00px;background:#808080;"></div>
</div></body></html>
